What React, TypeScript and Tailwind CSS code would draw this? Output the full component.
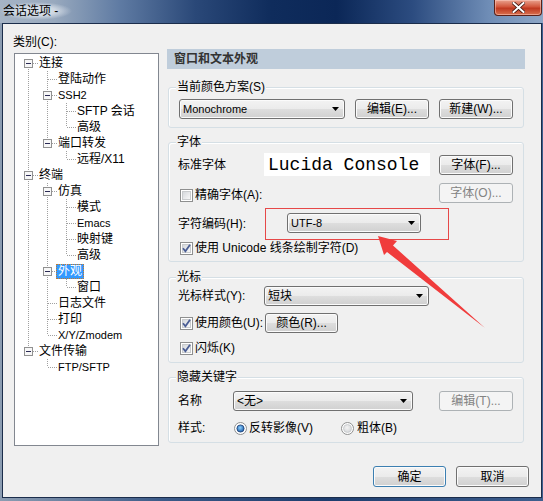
import { useId } from "react";

type TreeItem = {
  label: string;
  guides: boolean[];
  kids?: boolean;
  last?: boolean;
  first?: boolean;
  sel?: boolean;
  latin?: boolean;
};

const tree: TreeItem[] = [
  { label: "连接", guides: [], kids: true, first: true },
  { label: "登陆动作", guides: [true] },
  { label: "SSH2", guides: [true], kids: true, latin: true },
  { label: "SFTP 会话", guides: [true, true] },
  { label: "高级", guides: [true, true], last: true },
  { label: "端口转发", guides: [true], kids: true, last: true },
  { label: "远程/X11", guides: [true, false], last: true },
  { label: "终端", guides: [], kids: true },
  { label: "仿真", guides: [true], kids: true },
  { label: "模式", guides: [true, true] },
  { label: "Emacs", guides: [true, true], latin: true },
  { label: "映射键", guides: [true, true] },
  { label: "高级", guides: [true, true], last: true },
  { label: "外观", guides: [true], kids: true, sel: true },
  { label: "窗口", guides: [true, true], last: true },
  { label: "日志文件", guides: [true] },
  { label: "打印", guides: [true] },
  { label: "X/Y/Zmodem", guides: [true], last: true, latin: true },
  { label: "文件传输", guides: [], kids: true, last: true },
  { label: "FTP/SFTP", guides: [false], last: true, latin: true },
];

const btnBg =
  "bg-[linear-gradient(to_bottom,#f3f3f3,#ebebeb_50%,#dedede_50%,#d0d0d0)] shadow-[inset_0_0_0_1px_#fbfbfb]";

function Guide({ on }: { on: boolean }) {
  return (
    <svg width="19" height="16" className="shrink-0" shapeRendering="crispEdges">
      {on && <line x1="8.5" y1="0" x2="8.5" y2="16" stroke="#a0a0a0" strokeDasharray="1 1" />}
    </svg>
  );
}

function Elbow({ kids, last, first }: { kids?: boolean; last?: boolean; first?: boolean }) {
  return (
    <svg width="19" height="16" className="shrink-0" shapeRendering="crispEdges">
      {!first && <line x1="8.5" y1="0" x2="8.5" y2="8" stroke="#a0a0a0" strokeDasharray="1 1" />}
      {!last && <line x1="8.5" y1="8" x2="8.5" y2="16" stroke="#a0a0a0" strokeDasharray="1 1" />}
      <line x1="9" y1="8.5" x2="19" y2="8.5" stroke="#a0a0a0" strokeDasharray="1 1" />
      {kids && (
        <>
          <rect x="4.5" y="4.5" width="8" height="8" fill="#f7f7f7" stroke="#919191" />
          <line x1="6" y1="8.5" x2="11" y2="8.5" stroke="#2b2b55" />
        </>
      )}
    </svg>
  );
}

function Check({ checked }: { checked?: boolean }) {
  const id = useId();
  return (
    <svg width="13" height="13" className="shrink-0">
      <defs>
        <linearGradient id={id} x1="0" y1="0" x2="1" y2="1">
          <stop offset="0" stopColor="#d3d6da" />
          <stop offset="1" stopColor="#fafafa" />
        </linearGradient>
      </defs>
      <rect x="0.5" y="0.5" width="12" height="12" fill="#fff" stroke="#8e8f8f" />
      <rect x="2.5" y="2.5" width="8" height="8" fill={`url(#${id})`} stroke="#c9cbcd" />
      {checked && (
        <path d="M3 6.3 L5.4 9.2 L10 2.8" fill="none" stroke="#4a5d94" strokeWidth="1.8" />
      )}
    </svg>
  );
}

function Radio({ on }: { on?: boolean }) {
  const id = useId();
  return (
    <svg width="13" height="13" className="shrink-0">
      <defs>
        <radialGradient id={id} cx="0.45" cy="0.4" r="0.6">
          <stop offset="0" stopColor={on ? "#8ed2ff" : "#f4f4f4"} />
          <stop offset="1" stopColor={on ? "#1a5aa8" : "#d4d6d9"} />
        </radialGradient>
      </defs>
      <circle cx="6.5" cy="6.5" r="6" fill="#fff" stroke="#8e8f8f" />
      <circle cx="6.5" cy="6.5" r={on ? 3.6 : 4} fill={`url(#${id})`} stroke={on ? "#1e3f72" : "#c4c6c9"} strokeWidth="0.8" />
    </svg>
  );
}

function Btn({ children, className = "", disabled }: { children: React.ReactNode; className?: string; disabled?: boolean }) {
  const look = disabled
    ? "border-[#adb2b5] bg-[#f4f4f4] text-[#838383]"
    : `border-[#707070] ${btnBg} text-black`;
  return (
    <div className={`flex h-[20px] shrink-0 items-center justify-center rounded-[3px] border text-[12px] leading-none ${look} ${className}`}>
      {children}
    </div>
  );
}

function Combo({ text, className = "", latin }: { text: string; className?: string; latin?: boolean }) {
  return (
    <div className={`flex h-[20px] shrink-0 items-center justify-between rounded-[3px] border border-[#707070] pl-[3px] pr-[5px] ${btnBg} ${className}`}>
      <span className={latin ? "text-[11px] leading-none" : "text-[12px] leading-none"}>{text}</span>
      <svg width="7" height="4">
        <polygon points="0,0 7,0 3.5,4" fill="#000" />
      </svg>
    </div>
  );
}

function Group({ title, className = "", children }: { title: string; className?: string; children: React.ReactNode }) {
  return (
    <div className={`ml-px w-[356px] rounded-[3px] border border-[#d5dfe5] shadow-[inset_1px_1px_0_#fff] ${className}`}>
      <div className="-mt-[9px] ml-[7px] w-fit bg-[#f0f0f0] px-px text-[12px] leading-[16px]">{title}</div>
      {children}
    </div>
  );
}

function CheckLabel({ text, checked, className = "" }: { text: string; checked?: boolean; className?: string }) {
  return (
    <div className={`flex h-[14px] items-center ${className}`}>
      <Check checked={checked} />
      <span className="ml-[2px] text-[12px] leading-none">{text}</span>
    </div>
  );
}

export default function App() {
  return (
    <div className="relative flex h-[501px] w-[543px] flex-col overflow-hidden bg-[linear-gradient(to_right,#8c9db2,#3b5a88_30%,#1d3d6e_60%,#3e5f8e)] font-['Liberation_Sans','Noto_Sans_CJK_SC',sans-serif] text-black">
      {/* title bar */}
      <div className="flex h-[23px] shrink-0 items-start bg-[linear-gradient(to_right,#a6b4c5_0%,#98a9be_10%,#5f7ba3_22%,#2a4878_36%,#0f2c5c_50%,#0b2757_62%,#2c4c80_76%,#6f8db6_90%,#8da6c6_100%)]">
        <div className="mt-[2px] bg-[radial-gradient(closest-side,rgba(228,234,241,0.95),rgba(228,234,241,0.7)_55%,rgba(228,234,241,0))] py-px pl-[3px] pr-[14px] text-[12px] leading-[16px]">
          会话选项 -
        </div>
        <div className="ml-auto mr-px flex h-[16px] w-[48px] items-center justify-center rounded-b-[4px] border border-t-0 border-[#5a2018] bg-[linear-gradient(to_bottom,#e9a28e,#d2563c_45%,#bf3820_55%,#d8714f)] shadow-[inset_0_0_0_1px_rgba(255,210,200,0.5)]">
          <svg width="13" height="11" viewBox="0 0 13 11">
            <path d="M1.5 1 L11.5 10 M11.5 1 L1.5 10" stroke="#3b120c" strokeWidth="3.6" strokeLinecap="square" />
            <path d="M1.5 1 L11.5 10 M11.5 1 L1.5 10" stroke="#fff" strokeWidth="2" strokeLinecap="square" />
          </svg>
        </div>
      </div>

      {/* dialog body */}
      <div className="ml-[2px] mr-px flex h-[475px] flex-col border border-[#1b2d4b] bg-[#f0f0f0] pb-[10px] pt-[10px]">
        <div className="flex items-start">
          {/* category tree */}
          <div className="flex w-[156px] flex-col pl-[11px]">
            <div className="-ml-px text-[12px] leading-[16px]">类别(C):</div>
            <div className="mt-[3px] h-[393px] w-[145px] border border-[#828790] bg-white pl-[5px] pt-px">
              {tree.map((r, i) => (
                <div key={i} className="flex h-4 items-center">
                  {r.guides.map((g, j) => (
                    <Guide key={j} on={g} />
                  ))}
                  <Elbow kids={r.kids} last={r.last} first={r.first} />
                  <span
                    className={`-ml-[2px] px-[2px] leading-[15px] ${r.latin ? "text-[11px]" : "text-[12px]"} ${
                      r.sel ? "bg-[#3399ff] text-white outline-1 outline-dotted outline-[#c27a2c] -outline-offset-1" : ""
                    }`}
                  >
                    {r.label}
                  </span>
                </div>
              ))}
            </div>
          </div>

          {/* settings */}
          <div className="ml-[8px] mt-[15px] flex w-[358px] flex-col">
            <div className="h-[20px] bg-[#bfcddb] pl-[7px] text-[12px] font-bold leading-[20px] text-[#333]">窗口和文本外观</div>

            <Group title="当前颜色方案(S)" className="mt-[18px] pb-[8px]">
              <div className="mt-[4px] flex px-[10px]">
                <Combo text="Monochrome" latin className="w-[166px]" />
                <Btn className="ml-auto w-[74px]">编辑(E)...</Btn>
                <Btn className="ml-[10px] w-[74px]">新建(W)...</Btn>
              </div>
            </Group>

            <Group title="字体" className="mt-[14px] pb-[6px]">
              <div className="mt-[3px] flex h-[23px] items-center pl-[9px] pr-[10px]">
                <span className="w-[86px] text-[12px]">标准字体</span>
                <div className="flex h-[23px] w-[166px] items-center bg-white pl-[4px] font-['Liberation_Mono',monospace] text-[18px] leading-none">
                  Lucida Console
                </div>
                <Btn className="ml-auto w-[74px]">字体(F)...</Btn>
              </div>
              <div className="mt-[7px] flex h-[20px] items-end pl-[11px] pr-[10px]">
                <CheckLabel text="精确字体(A):" className="mb-px" />
                <Btn disabled className="ml-auto w-[74px]">字体(O)...</Btn>
              </div>
              <div className="mt-[5px] flex h-[32px] items-center pl-[9px]">
                <span className="w-[87px] text-[12px]">字符编码(H):</span>
                <div className="h-[32px] w-[184px] border border-[#e64848] pl-[21px] pt-[4px]">
                  <Combo text="UTF-8" latin className="w-[134px]" />
                </div>
              </div>
              <CheckLabel text="使用 Unicode 线条绘制字符(D)" checked className="mt-px pl-[11px]" />
            </Group>

            <Group title="光标" className="mt-[15px] pb-[7px]">
              <div className="mt-px flex items-center pl-[9px]">
                <span className="w-[86px] text-[12px]">光标样式(Y):</span>
                <Combo text="短块" className="w-[165px]" />
              </div>
              <div className="mt-[7px] flex items-center pl-[11px]">
                <CheckLabel text="使用颜色(U):" checked className="w-[85px]" />
                <Btn className="w-[73px]">颜色(R)...</Btn>
              </div>
              <CheckLabel text="闪烁(K)" checked className="mt-[8px] pl-[11px]" />
            </Group>

            <Group title="隐藏关键字" className="mt-[14px] pb-[7px]">
              <div className="mt-[6px] flex items-center pl-[9px] pr-[10px]">
                <span className="w-[55px] text-[12px]">名称</span>
                <Combo text="<无>" className="w-[180px]" />
                <Btn disabled className="ml-auto w-[74px]">编辑(T)...</Btn>
              </div>
              <div className="mt-[10px] flex h-[14px] items-center pl-[9px]">
                <span className="w-[56px] text-[12px] leading-none">样式:</span>
                <div className="flex w-[107px] items-center">
                  <Radio on />
                  <span className="ml-[2px] text-[12px] leading-none">反转影像(V)</span>
                </div>
                <div className="flex items-center">
                  <Radio />
                  <span className="ml-[3px] text-[12px] leading-none">粗体(B)</span>
                </div>
              </div>
            </Group>
          </div>
        </div>

        {/* dialog buttons */}
        <div className="mt-auto flex justify-end pr-[12px]">
          <Btn className="h-[21px] w-[73px] !border-[#3c7fb1] shadow-[inset_0_0_0_1px_#a9def6]">确定</Btn>
          <Btn className="ml-[10px] h-[21px] w-[73px]">取消</Btn>
        </div>
      </div>

      {/* red annotation arrow */}
      <svg className="pointer-events-none absolute left-0 top-0" width="543" height="501">
        <polygon points="378,236 397,241 393,245.5 485,328 387,252 384,255" fill="#f03c3c" />
      </svg>
    </div>
  );
}
